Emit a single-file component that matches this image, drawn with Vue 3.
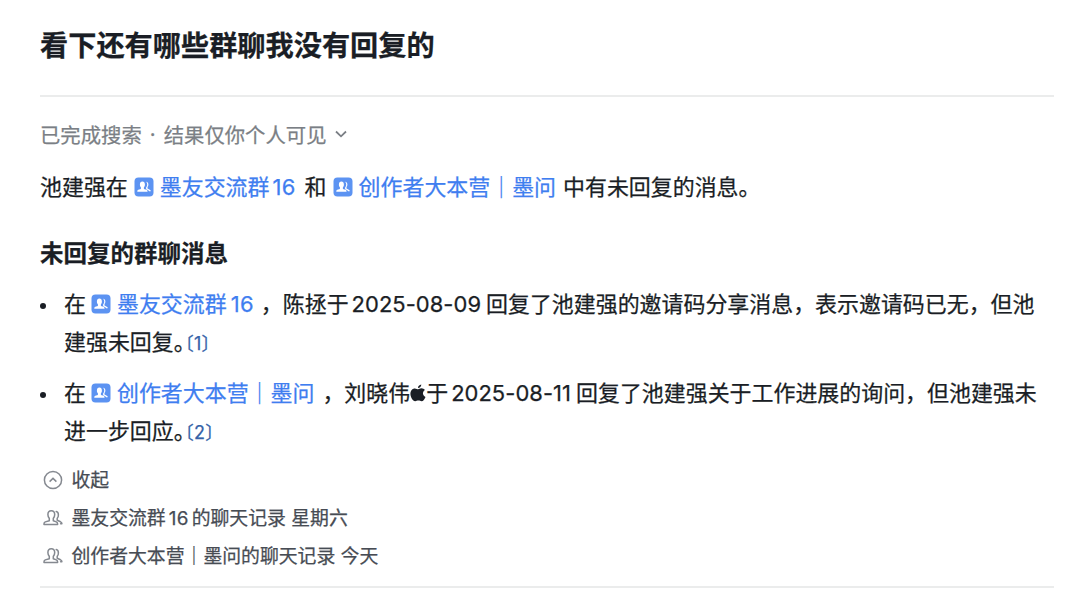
<script setup>
import { ref } from "vue";

const title = "看下还有哪些群聊我没有回复的";

const summary = [
  { text: "池建强在" },
  { group: "墨友交流群", num: "16" },
  { text: "和" },
  { group: "创作者大本营｜墨问" },
  { text: "中有未回复的消息。" }
];

const messages = ref([
  {
    id: 1,
    group: "墨友交流群",
    num: "16",
    from: "陈拯",
    date: "2025-08-09",
    text: "回复了池建强的邀请码分享消息，表示邀请码已无，但池建强未回复"
  },
  {
    id: 2,
    group: "创作者大本营｜墨问",
    from: "刘晓伟",
    apple: true,
    date: "2025-08-11",
    text: "回复了池建强关于工作进展的询问，但池建强未进一步回应"
  }
]);

const records = [
  { id: 1, name: "墨友交流群", num: "16", suffix: "的聊天记录 星期六" },
  { id: 2, name: "创作者大本营｜墨问", suffix: "的聊天记录 今天" }
];
</script>

<template>
  <div class="page">
    <svg class="defs" width="0" height="0">
      <symbol id="group-solid" viewBox="0 0 20 20">
        <rect x="0.5" y="0.5" width="19" height="19" rx="4" fill="#5c93f2" />
        <path d="M12.200 4.800c1.500.2 2.200 1.300 2.200 2.800 0 1.100-.4 1.900-.9 2.500v1.400l2.300 1.200c.6.300 1 .8 1 1.500h-1.800c-.2-.6-.6-1-1.200-1.200l-1.700-.8v-1.800c.8-.8 1.100-1.700 1.100-2.900 0-1-.4-2-1-2.700z" fill="#fff" />
        <path d="M8.400 4.500c1.600 0 2.500 1.200 2.500 2.900 0 1.300-.4 2.200-1 2.800v1.700l2.600.9c.7.300 1 .8 1 1.500v.4H3.300v-.4c0-.7.3-1.200 1-1.500l2.600-.9v-1.700c-.6-.6-1-1.500-1-2.800 0-1.700.9-2.900 2.500-2.900z" fill="#fff" />
      </symbol>
      <symbol id="group-line" viewBox="0 0 20 20">
        <path d="M8.300 2.700c2.200 0 3.400 1.600 3.400 3.900 0 1.700-.6 3-1.400 3.800v2.300l3 1.200c.9.400 1.300.9 1.300 1.900v.7H1v-.7c0-1 .4-1.500 1.300-1.900l4-1.200v-2.300c-.8-.8-1.400-2.100-1.400-3.800 0-2.300 1.200-3.900 3.400-3.900z" fill="none" stroke="currentColor" stroke-width="1.500" stroke-linejoin="round" />
        <path d="M13.200 3.400c1.500.3 2.200 1.700 2.200 3.500 0 1.500-.5 2.700-1.200 3.400v2l3.300 1.500c.8.400 1.400 1 1.400 1.900h-1.300" fill="none" stroke="currentColor" stroke-width="1.500" stroke-linejoin="round" stroke-linecap="round" />
      </symbol>
    </svg>

    <h1>{{ title }}</h1>

    <section class="content">
      <div class="status">
        <span>已完成搜索</span><span class="dot">·</span><span>结果仅你个人可见</span>
        <svg class="chevron" viewBox="0 0 14 14"><path d="M2 4.500 7 9.300l5-4.800" /></svg>
      </div>

      <p class="summary">
        <template v-for="(part, i) in summary" :key="i">
          <a v-if="part.group" class="mention"><svg class="badge"><use href="#group-solid" /></svg>{{ part.group }}<span v-if="part.num" class="num">{{ part.num }}</span></a>
          <span v-else>{{ part.text }}</span>
        </template>
      </p>

      <h2>未回复的群聊消息</h2>

      <ul class="messages">
        <li v-for="item in messages" :key="item.id">
          在<a class="mention"><svg class="badge"><use href="#group-solid" /></svg>{{ item.group }}<span v-if="item.num" class="num">{{ item.num }}</span></a>，{{ item.from }}<svg v-if="item.apple" class="apple" viewBox="0 0 16 18"><path d="M11.300.5c.1 1.800-1.500 3.600-3.300 3.600C7.800 2.400 9.500.7 11.300.5zM8.200 5.200c.8 0 1.800-.9 3.200-.9 1.500 0 2.700.7 3.500 1.800-2.900 1.800-2.400 5.600.6 6.800-.8 2.200-2.300 4.300-3.900 4.300-1.200 0-1.800-.7-3.200-.7s-2 .7-3.200.7C2.800 17.200.4 13.200.4 9.800c0-3.300 2-5.400 4.400-5.400 1.500 0 2.500.8 3.400.8z" /></svg>于<span class="date">{{ item.date }}</span>{{ item.text }}<span class="stop">。</span><a class="cite"><i>〔</i>{{ item.id }}<i>〕</i></a>
        </li>
      </ul>

      <div class="records">
        <div class="row">
          <svg viewBox="0 0 20 20">
            <circle cx="10" cy="10" r="8.600" fill="none" stroke="currentColor" stroke-width="1.500" />
            <path d="M6.600 11.600 10 8.400l3.400 3.200" fill="none" stroke="currentColor" stroke-width="1.500" />
          </svg>
          <span>收起</span>
        </div>
        <div v-for="record in records" :key="record.id" class="row">
          <svg><use href="#group-line" /></svg>
          <span>{{ record.name }}<span v-if="record.num" class="num">{{ record.num }}</span>{{ record.suffix }}</span>
        </div>
      </div>
    </section>
  </div>
</template>

<style>
body {
  background: #fff;
}
</style>

<style scoped>
.page {
  box-sizing: border-box;
  height: 591px;
  padding: 0 26px 0 40px;
  overflow: hidden;
  color: #1a1e25;
  font-family: "Inter", "Noto Sans CJK SC", sans-serif;
  -webkit-text-stroke: 0.25px currentColor;
}

.defs {
  display: block;
}

h1 {
  margin: 0;
  height: 95px;
  line-height: 93px;
  font-size: 28.200px;
  font-weight: 700;
  border-bottom: 2px solid #ebecec;
}

.content {
  height: 489px;
  border-bottom: 2px solid #ebecec;
}

/* Estado de la busqueda */
.status {
  display: flex;
  align-items: center;
  height: 38px;
  padding-top: 18px;
  font-size: 20.350px;
  color: #7b7f85;
}

.dot {
  width: 22px;
  text-align: center;
}

.chevron {
  width: 14px;
  height: 14px;
  margin-left: 7px;
}

.chevron path {
  fill: none;
  stroke: currentColor;
  stroke-width: 1.800;
}

.summary {
  display: flex;
  gap: 8px;
  margin: 15px 0 0;
  line-height: 38px;
  font-size: 21.950px;
}

.mention {
  color: #3f7ef0;
}

.summary .mention {
  margin: 0 -1px 0 -2px;
}

.badge {
  width: 20px;
  height: 20px;
  margin-right: 6px;
  vertical-align: -2px;
}

.num {
  margin: 0 2px 0 3px;
  letter-spacing: 0.3px;
}

h2 {
  margin: 29px 0 0;
  line-height: 38px;
  font-size: 23.500px;
  font-weight: 700;
}

.messages {
  margin: 12px 0 0;
  padding: 0;
  list-style: none;
  font-size: 21.950px;
  line-height: 38px;
}

.messages li {
  position: relative;
  padding: 0 8px 0 24px;
  margin-bottom: 11px;
}

.messages li::before {
  content: "";
  position: absolute;
  left: 0;
  top: 18px;
  width: 6px;
  height: 6px;
  border-radius: 50%;
  background: #1a1e25;
}

.messages .mention {
  margin: 0 8px 0 5px;
}

.messages .num {
  margin: 0 -1px 0 4px;
}

.date {
  margin: 0 5px 0 3px;
  letter-spacing: 0.050px;
}

.apple {
  width: 16px;
  height: 18px;
  vertical-align: -1px;
  fill: #1a1e25;
}

.stop,
.cite i {
  font-feature-settings: "halt";
}

.cite {
  font-size: 18px;
  letter-spacing: 0.300px;
  color: #3562a8;
}

.cite i {
  font-style: normal;
}

/* Registros de chat */
.records {
  margin-top: -1px;
  font-size: 18.850px;
  line-height: 38px;
  color: #474c54;
}

.records .num {
  margin: 0 3px;
}

.row {
  display: flex;
  align-items: center;
}

.row svg {
  width: 20px;
  height: 20px;
  margin: 0 9px 2px 2.500px;
  color: #858990;
}
</style>
